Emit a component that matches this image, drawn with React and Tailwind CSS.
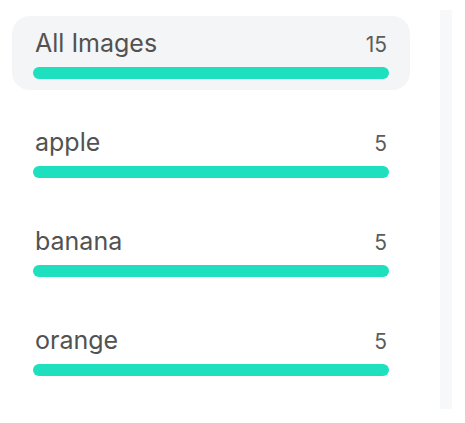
import React from 'react';

const categories = [
  { name: 'All Images', count: 15 },
  { name: 'apple', count: 5 },
  { name: 'banana', count: 5 },
  { name: 'orange', count: 5 },
];

const CategoryRow = ({ name, count, active }) => (
  <div
    className={`h-[74px] rounded-[18px] px-[21px] pt-[12px] ${active ? 'bg-[#f4f5f7]' : ''}`}
  >
    <div className="flex items-baseline justify-between pl-[2px] pr-[2px]">
      <span className="text-[25px] leading-[30px] text-[#525252]">{name}</span>
      <span className="text-[21px] leading-[30px] text-[#5c5c5c]">{count}</span>
    </div>
    <div className="mt-[7px] h-[12px] w-full rounded-full bg-[#1ee0bf]" />
  </div>
);

const App = () => {
  return (
    <div className="flex h-[423px] w-[465px] bg-white font-['Inter',sans-serif]">
      <div className="ml-[12px] mt-[16px] flex w-[398px] flex-col gap-[25px]">
        {categories.map((c, i) => (
          <CategoryRow key={c.name} name={c.name} count={c.count} active={i === 0} />
        ))}
      </div>
      <div className="ml-[30px] mt-[10px] h-[399px] w-[12px] bg-[#f7f8fa]" />
    </div>
  );
};

export default App;
